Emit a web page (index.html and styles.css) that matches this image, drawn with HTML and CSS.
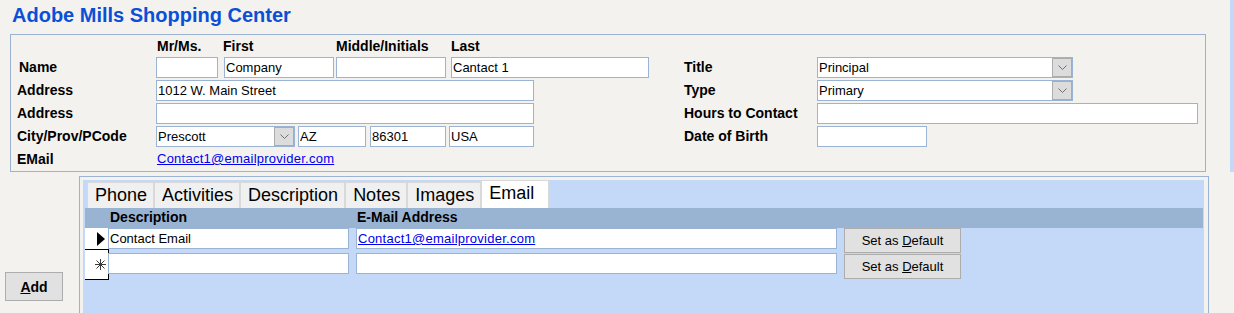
FILE: index.html
```html
<!DOCTYPE html>
<html lang="en">
<head>
  <meta charset="UTF-8" />
  <title>Adobe Mills Shopping Center</title>
  <link rel="stylesheet" href="styles.css">
</head>
<body>
<div class="page">
  <div class="main">
    <h1 class="title">Adobe Mills Shopping Center</h1>

    <div class="contact-box">
      <div class="left-grid">
        <div class="heads">
          <span class="w-mr">Mr/Ms.</span>
          <span class="w-first">First</span>
          <span class="w-middle">Middle/Initials</span>
          <span class="w-last">Last</span>
        </div>

        <label class="lbl lbl-name">Name</label>
        <div class="fields">
          <input class="w-mr" value="">
          <input class="w-first" value="Company">
          <input class="w-middle" value="">
          <input class="w-last" value="Cantact 1">
        </div>

        <label class="lbl">Address</label>
        <div class="fields">
          <input class="w-addr" value="1012 W. Main Street">
        </div>

        <label class="lbl">Address</label>
        <div class="fields">
          <input class="w-addr" value="">
        </div>

        <label class="lbl">City/Prov/PCode</label>
        <div class="fields">
          <div class="select w-city">
            <span class="val">Prescott</span>
            <span class="arrow"><svg width="9" height="5" viewBox="0 0 9 5"><path d="M0.5 0.5 L4.5 4.5 L8.5 0.5" fill="none" stroke="#707070"/></svg></span>
          </div>
          <input class="w-prov" value="AZ">
          <input class="w-post" value="86301">
          <input class="w-country" value="USA">
        </div>

        <label class="lbl">EMail</label>
        <div class="link-field"><a href="#" class="link">Contact1@emailprovider.com</a></div>
      </div>

      <div class="right-grid">
        <div class="spacer"></div>

        <label class="lbl">Title</label>
        <div class="fields">
          <div class="select w-title">
            <span class="val">Principal</span>
            <span class="arrow"><svg width="9" height="5" viewBox="0 0 9 5"><path d="M0.5 0.5 L4.5 4.5 L8.5 0.5" fill="none" stroke="#707070"/></svg></span>
          </div>
        </div>

        <label class="lbl">Type</label>
        <div class="fields">
          <div class="select w-title">
            <span class="val">Primary</span>
            <span class="arrow"><svg width="9" height="5" viewBox="0 0 9 5"><path d="M0.5 0.5 L4.5 4.5 L8.5 0.5" fill="none" stroke="#707070"/></svg></span>
          </div>
        </div>

        <label class="lbl">Hours to Contact</label>
        <div class="fields">
          <input class="w-hours" value="">
        </div>

        <label class="lbl">Date of Birth</label>
        <div class="fields">
          <input class="w-dob" value="">
        </div>
      </div>
    </div>

    <div class="lower">
      <div class="side">
        <button class="btn btn-add"><u>A</u>dd</button>
      </div>

      <div class="panel">
        <div class="panel-inner">
          <div class="tabs">
            <div class="tab">Phone</div>
            <div class="tab">Activities</div>
            <div class="tab">Description</div>
            <div class="tab">Notes</div>
            <div class="tab">Images</div>
            <div class="tab active">Email</div>
          </div>

          <div class="grid-head">
            <span class="head-desc">Description</span>
            <span>E-Mail Address</span>
          </div>

          <div class="rows">
            <div class="selectors">
              <div class="sel sel-current">
                <svg width="8" height="14" viewBox="0 0 8 14"><path d="M0 0 L8 7 L0 14 Z" fill="#000"/></svg>
              </div>
              <div class="sel sel-new">
                <svg width="11" height="11" viewBox="0 0 11 11"><path d="M5.5 0v11M0 5.5h11M1.5 1.5l8 8M9.5 1.5l-8 8" stroke="#3a3a3a" stroke-width="1" fill="none"/></svg>
              </div>
            </div>
            <div class="col col-desc">
              <input value="Contact Email">
              <input value="">
            </div>
            <div class="col col-mail">
              <div class="cell"><a href="#" class="link">Contact1@emailprovider.com</a></div>
              <input value="">
            </div>
            <div class="col col-btn">
              <button class="btn">Set as <u>D</u>efault</button>
              <button class="btn">Set as <u>D</u>efault</button>
            </div>
          </div>
        </div>
      </div>
    </div>
  </div>
  <div class="edge"></div>
</div>
</body>
</html>
```

FILE: styles.css
```css
body {
  margin: 0;
  background-color: #f3f2ee;
  font-family: "Liberation Sans", Arial, sans-serif;
  font-size: 13px;
  color: #000;
  overflow: hidden;
}
.page {
  display: flex;
  align-items: flex-start;
}
.main {
  width: 1230px;
}
.edge {
  width: 4px;
  height: 172px;
  background-color: #c4d9f7;
}
.title {
  margin: 0 0 8px;
  padding: 4px 0 0 12px;
  font-size: 20px;
  line-height: 22px;
  font-weight: bold;
  color: #0b4fd6;
}

/* top form */
.contact-box {
  margin-top: 1px;
  margin-left: 10px;
  width: 1196px;
  box-sizing: border-box;
  border: 1px solid #9bb3d0;
  padding: 0 0 1px 6px;
  display: flex;
}
.left-grid {
  display: grid;
  grid-template-columns: 139px 493px;
  grid-template-rows: 20px repeat(5, 21px);
  row-gap: 2px;
}
.right-grid {
  margin-left: 35px;
  display: grid;
  grid-template-columns: 133px 381px;
  grid-template-rows: 20px repeat(4, 21px);
  row-gap: 2px;
}
.spacer {
  grid-column: 1 / -1;
}
.lbl {
  font-size: 14px;
  font-weight: bold;
  line-height: 16px;
  align-self: center;
  margin-top: -2px;
}
.lbl-name {
  padding-left: 2px;
}
.heads {
  grid-column: 2;
  display: flex;
  align-self: end;
  padding-bottom: 1px;
  font-size: 14px;
  font-weight: bold;
  line-height: 16px;
}
.heads span {
  padding-left: 1px;
  box-sizing: border-box;
}
.heads .w-first {
  padding-left: 0;
  margin-left: 5px;
}
.fields {
  display: flex;
}
input {
  font: 13px "Liberation Sans", Arial, sans-serif;
  color: #000;
  height: 21px;
  margin: 0;
  padding: 0 0 0 1px;
  border: 1px solid #9bb4d4;
  border-radius: 0;
  box-sizing: border-box;
  background-color: #fff;
  outline: none;
}
.w-mr { width: 62px; }
.w-first { width: 110px; margin-left: 6px; }
.w-middle { width: 110px; margin-left: 2px; }
.w-last { width: 198px; margin-left: 5px; }
.w-addr { width: 378px; }
.w-city { width: 139px; }
.w-prov { width: 68px; margin-left: 3px; }
.w-post { width: 76px; margin-left: 4px; }
.w-country { width: 85px; margin-left: 3px; }
.w-title { width: 256px; }
.w-hours { width: 381px; }
.w-dob { width: 110px; }

.select {
  display: flex;
  height: 21px;
  box-sizing: border-box;
  border: 1px solid #9bb4d4;
  background-color: #fff;
}
.select .val {
  flex: 1;
  padding-left: 1px;
  line-height: 19px;
}
.select .arrow {
  width: 20px;
  box-sizing: border-box;
  background-color: #dcdcdc;
  border: 1px solid #acacac;
  display: flex;
  align-items: center;
  justify-content: center;
}
.link-field {
  align-self: center;
  margin-top: -2px;
  padding-left: 1px;
}
.link {
  color: #0000ee;
  text-decoration: underline;
  letter-spacing: 0.25px;
}

/* lower part */
.lower {
  display: flex;
  margin-top: 4px;
  padding-left: 5px;
}
.side {
  width: 58px;
  margin-right: 16px;
  padding-top: 96px;
}
.btn {
  font: 13px "Liberation Sans", Arial, sans-serif;
  color: #000;
  background-color: #e1e1e1;
  border: 1px solid #adadad;
  padding: 0;
  box-sizing: border-box;
  cursor: pointer;
}
.btn-add {
  width: 58px;
  height: 29px;
  font-size: 14px;
  font-weight: bold;
}
.panel {
  width: 1130px;
  height: 140px;
  box-sizing: border-box;
  border: 1px solid #9bb4d4;
  border-bottom: none;
  padding: 3px 4px 0 3px;
}
.panel-inner {
  height: 100%;
  background-color: #c4d9f7;
}
.tabs {
  display: flex;
  align-items: flex-end;
  height: 28px;
  padding-left: 4px;
}
.tab {
  height: 26px;
  box-sizing: border-box;
  padding: 0 6px 0 7px;
  border: 1px solid #d9d9d9;
  border-bottom: none;
  background-color: #f0f0f0;
  font-size: 18px;
  line-height: 25px;
}
.tab.active {
  height: 28px;
  line-height: 25px;
  padding: 0 14px 0 7px;
  background-color: #fff;
}
.grid-head {
  display: flex;
  height: 20px;
  margin: 0 1px 0 2px;
  background-color: #99b4d3;
  font-size: 14px;
  font-weight: bold;
  line-height: 18px;
}
.head-desc {
  width: 247px;
  padding-left: 25px;
}
.rows {
  display: flex;
  align-items: flex-start;
  margin-left: 2px;
}
.selectors {
  width: 24px;
}
.sel {
  box-sizing: border-box;
  background-color: #fff;
  border-right: 1px solid #000;
  border-bottom: 1px solid #000;
  display: flex;
  align-items: center;
  justify-content: flex-end;
}
.sel-current {
  height: 22px;
  padding-right: 3px;
}
.sel-new {
  height: 30px;
  padding-right: 2px;
}
.col {
  display: flex;
  flex-direction: column;
  gap: 4px;
}
.col-desc {
  width: 241px;
  margin-left: -1px;
}
.col-mail {
  width: 481px;
  margin-left: 7px;
}
.col-desc input,
.col-mail input {
  width: 100%;
}
.cell {
  height: 21px;
  box-sizing: border-box;
  border: 1px solid #9bb4d4;
  background-color: #fff;
  padding-left: 1px;
  line-height: 19px;
}
.col-btn {
  width: 117px;
  margin-left: 7px;
  gap: 1px;
}
.col-btn .btn {
  height: 25px;
}
```
